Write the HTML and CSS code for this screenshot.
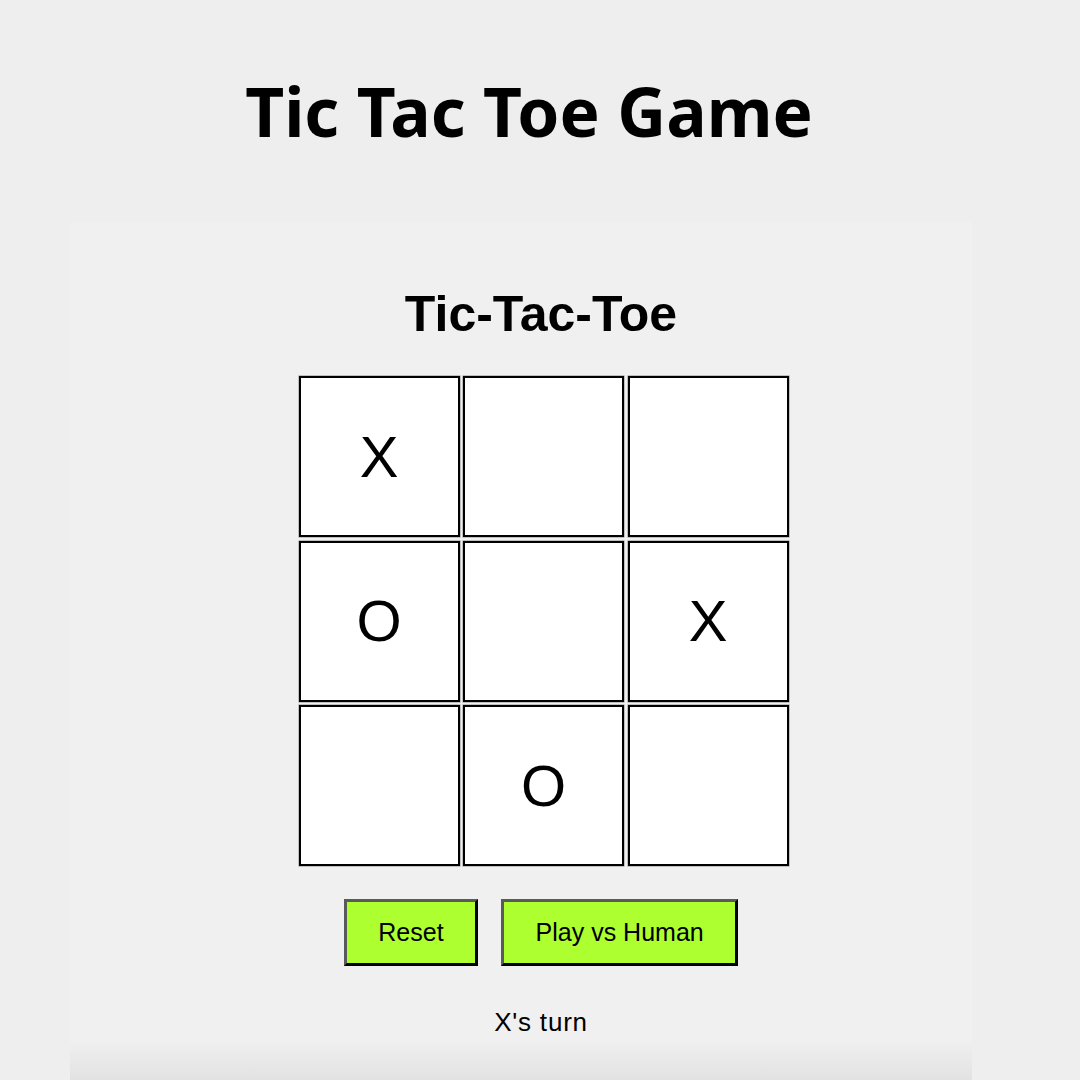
FILE: index.html
```html
<!DOCTYPE html>
<html lang="en">
<head>
<meta charset="utf-8">
<title>Tic Tac Toe Game</title>
<link rel="stylesheet" href="styles.css">
</head>
<body>
  <header class="page-header">
    <h1 class="page-title">Tic Tac Toe Game</h1>
  </header>
  <main class="panel">
    <h2 class="game-title">Tic-Tac-Toe</h2>
    <div class="board">
      <div class="cell">X</div>
      <div class="cell"></div>
      <div class="cell"></div>
      <div class="cell">O</div>
      <div class="cell"></div>
      <div class="cell">X</div>
      <div class="cell"></div>
      <div class="cell">O</div>
      <div class="cell"></div>
    </div>
    <div class="controls">
      <button class="btn">Reset</button>
      <button class="btn">Play vs Human</button>
    </div>
    <p class="status">X's turn</p>
    <div class="panel-fade"></div>
  </main>
</body>
</html>
```
FILE: styles.css
```css
html, body {
  margin: 0;
  padding: 0;
  height: 1080px;
  overflow: hidden;
}
body {
  background: #eeeeee;
  color: #000;
  font-family: "Liberation Sans", Arial, sans-serif;
}
.page-header {
  display: flex;
  justify-content: center;
  padding-top: 71px;
  height: 222px;
  box-sizing: border-box;
}
.page-title {
  margin: 0 22px 0 0;
  font-family: "Noto Sans", "Open Sans", sans-serif;
  font-weight: 700;
  font-size: 67.5px;
  line-height: 1.2;
  letter-spacing: 0;
}
.panel {
  margin: 0 108px 0 70px;
  background: #f0f0f0;
  height: 858px;
  display: flex;
  flex-direction: column;
  align-items: center;
  padding-top: 64px;
  box-sizing: border-box;
}
.game-title {
  margin: 0 0 33px 40px;
  font-size: 50px;
  font-weight: 700;
  line-height: 57px;
}
.board {
  display: grid;
  grid-template-columns: repeat(3, 161px);
  grid-template-rows: repeat(3, 161px);
  gap: 3.5px;
  margin-left: 45px;
}
.cell {
  background: #fff;
  border: 2px solid #000;
  box-shadow: 0 0 0 0.6px rgba(0,0,0,0.35);
  display: flex;
  align-items: center;
  justify-content: center;
  font-size: 58px;
  line-height: 1;
}
.controls {
  display: flex;
  gap: 23px;
  margin-top: 33px;
  margin-left: 40px;
}
.btn {
  font-family: "Liberation Sans", Arial, sans-serif;
  font-size: 25px;
  background: #adff2f;
  color: #000;
  border-style: solid;
  border-width: 3px;
  border-color: #5a5a5a #000 #000 #5a5a5a;
  padding: 0 31.5px;
  height: 67px;
  line-height: 27px;
}
.status {
  margin: 41px 0 0 40px;
  font-size: 26px;
  letter-spacing: 0.8px;
  line-height: 30px;
}
.panel-fade {
  margin-top: auto;
  align-self: stretch;
  height: 40px;
  background: linear-gradient(#f0f0f0, #e2e2e2);
}
```
